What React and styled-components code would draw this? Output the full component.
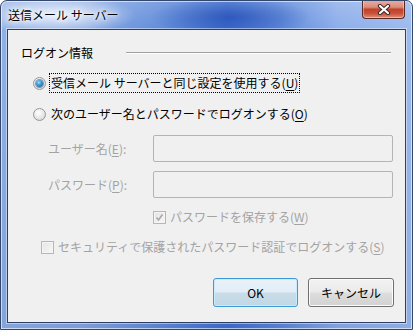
import React from "react";
import styled, { createGlobalStyle } from "styled-components";

const Global = createGlobalStyle`
  html, body { margin: 0; padding: 0; background: #ffffff; }
  body { font-family: "Noto Sans CJK JP", "Noto Sans", sans-serif; font-size: 12px; }
  * { box-sizing: border-box; }
`;

const Window = styled.div`
  width: 413px;
  height: 330px;
  display: flex;
  flex-direction: column;
  border-radius: 7px 7px 0 0;
  border: 1px solid #34466a;
  box-shadow: inset 0 0 0 1px rgba(255,255,255,0.6);
  background:
    radial-gradient(ellipse 80px 20px at 55px 14px, rgba(255,255,255,0.8), rgba(255,255,255,0) 100%),
    radial-gradient(ellipse 80px 20px at 230px 16px, rgba(20,60,170,0.55), rgba(20,60,170,0) 100%),
    linear-gradient(180deg, rgba(255,255,255,0.18) 0px, rgba(255,255,255,0) 30px, rgba(0,20,80,0.08) 100%),
    linear-gradient(90deg, #8fb0e6 0%, #86a8e4 20%, #5e8ad9 40%, #3f70d0 55%, #5c88da 68%, #8cadea 82%, #9bbaee 100%);
  overflow: hidden;
`;

const TitleBar = styled.div`
  height: 28px;
  display: flex;
  justify-content: space-between;
  align-items: flex-start;
  flex-shrink: 0;
`;

const TitleText = styled.div`
  padding: 6px 0 0 7px;
  font-size: 12px;
  line-height: 16px;
  color: #000;
  text-shadow: 0 0 6px #fff, 0 0 3px #fff, 0 0 8px #fff;
`;

const CloseButton = styled.div`
  width: 43px;
  height: 19px;
  margin: -1px 7px 0 0;
  border: 1px solid #5a2a24;
  border-top: none;
  border-radius: 0 0 4px 4px;
  background: linear-gradient(180deg, #e8b1a5 0%, #d98b7a 40%, #c2412a 52%, #c9503a 75%, #e2927c 100%);
  box-shadow: inset 0 0 0 1px rgba(255,255,255,0.35);
  display: flex;
  align-items: center;
  justify-content: center;
`;

const Frame = styled.div`
  flex: 1;
  display: flex;
  padding: 0 6px 6px 6px;
`;

const Panel = styled.div`
  flex: 1;
  background: #f0f0f0;
  border: 1px solid #2f3f63;
  box-shadow: 0 0 0 1px rgba(255,255,255,0.45);
  display: flex;
  flex-direction: column;
  padding-right: 11px;
`;

const GroupHeader = styled.div`
  display: flex;
  align-items: center;
  height: 16px;
  margin-top: 15px;
  padding-left: 13px;
  line-height: 16px;
  color: #000;
`;

const Separator = styled.div`
  flex: 1;
  margin-left: 33px;
  margin-right: 3px;
  border-top: 1px solid #a0a0a0;
  border-bottom: 1px solid #ffffff;
  height: 2px;
  margin-top: -1px;
`;

const Row = styled.div`
  display: flex;
  align-items: center;
  height: ${(p) => p.$h || 20}px;
  margin-top: ${(p) => p.$mt}px;
  padding-left: ${(p) => p.$indent}px;
  line-height: 16px;
`;

const Radio = styled.span`
  width: 13px;
  height: 13px;
  border-radius: 50%;
  border: 1px solid #979797;
  background: radial-gradient(circle at 40% 35%, #ffffff 0%, #e6e6e6 55%, #c9c9c9 100%);
  display: flex;
  align-items: center;
  justify-content: center;
  flex-shrink: 0;
  &::after {
    content: "";
    width: 7px;
    height: 7px;
    border-radius: 50%;
    display: ${(p) => (p.$checked ? "block" : "none")};
    background: radial-gradient(circle at 40% 35%, #9fe0ff 0%, #3a9ad9 40%, #0f5597 100%);
    box-shadow: 0 0 0 1px rgba(20, 70, 120, 0.5);
  }
`;

const Label = styled.span`
  margin-left: ${(p) => p.$gap || 4}px;
  padding: 1px 1px;
  color: ${(p) => (p.$disabled ? "#a3a3a3" : "#000")};
  border: 1px ${(p) => (p.$focus ? "dotted #000" : "solid transparent")};
  white-space: nowrap;
  u { text-underline-offset: 2px; }
`;

const FieldLabel = styled.span`
  width: 105px;
  color: #a3a3a3;
  white-space: nowrap;
  u { text-underline-offset: 2px; }
`;

const Input = styled.div`
  width: 240px;
  height: 27px;
  border: 1px solid #b4b4b4;
  border-radius: 2px;
  background: #f0f0f0;
`;

const CheckBox = styled.span`
  width: 13px;
  height: 13px;
  border: 1px solid #b7b7b7;
  background: linear-gradient(135deg, #e4e4e4 0%, #f8f8f8 100%);
  box-shadow: inset 0 0 0 1px #f4f4f4;
  display: flex;
  align-items: center;
  justify-content: center;
  flex-shrink: 0;
`;

const ButtonRow = styled.div`
  display: flex;
  justify-content: flex-end;
  gap: 10px;
  margin-top: 23px;
`;

const Button = styled.div`
  width: ${(p) => p.$w}px;
  height: 29px;
  border: 1px solid ${(p) => (p.$default ? "#3c9bd6" : "#707070")};
  border-radius: 3px;
  display: flex;
  align-items: center;
  justify-content: center;
  color: #000;
  line-height: 16px;
  box-shadow: inset 0 0 0 1px ${(p) => (p.$default ? "#c8ecfd" : "#fbfbfb")};
  background: ${(p) =>
    p.$default
      ? "linear-gradient(180deg, #eaf2fa 0%, #e2edf7 48%, #c9dde9 52%, #c0d7e5 100%)"
      : "linear-gradient(180deg, #f2f2f2 0%, #ebebeb 48%, #dddddd 52%, #d2d2d2 100%)"};
`;

export default function App() {
  return (
    <>
      <Global />
      <Window>
        <TitleBar>
          <TitleText>送信メール サーバー</TitleText>
          <CloseButton>
            <svg width="14" height="11" viewBox="0 0 14 11">
              <path d="M3 2 L11 9 M11 2 L3 9" stroke="#3b2a2a" strokeWidth="4.2" strokeLinecap="round" fill="none" />
              <path d="M3 2 L11 9 M11 2 L3 9" stroke="#ffffff" strokeWidth="2.2" strokeLinecap="round" fill="none" />
            </svg>
          </CloseButton>
        </TitleBar>
        <Frame>
          <Panel>
            <GroupHeader>
              <span>ログオン情報</span>
              <Separator />
            </GroupHeader>
            <Row $mt={12} $indent={25}>
              <Radio $checked />
              <Label $focus $gap={3}>受信メール サーバーと同じ設定を使用する(<u>U</u>)</Label>
            </Row>
            <Row $mt={11} $indent={25}>
              <Radio />
              <Label $gap={3}>次のユーザー名とパスワードでログオンする(<u>O</u>)</Label>
            </Row>
            <Row $h={27} $mt={11} $indent={40}>
              <FieldLabel>ユーザー名(<u>E</u>):</FieldLabel>
              <Input />
            </Row>
            <Row $h={27} $mt={9} $indent={40}>
              <FieldLabel>パスワード(<u>P</u>):</FieldLabel>
              <Input />
            </Row>
            <Row $h={16} $mt={11} $indent={145}>
              <CheckBox>
                <svg width="9" height="9" viewBox="0 0 9 9">
                  <path d="M1.5 4.5 L3.5 7 L7.5 1.5" stroke="#a8a8a8" strokeWidth="1.6" fill="none" />
                </svg>
              </CheckBox>
              <Label $disabled $gap={2}>パスワードを保存する(<u>W</u>)</Label>
            </Row>
            <Row $h={16} $mt={14} $indent={33}>
              <CheckBox />
              <Label $disabled $gap={2}>セキュリティで保護されたパスワード認証でログオンする(<u>S</u>)</Label>
            </Row>
            <ButtonRow>
              <Button $default $w={85}>OK</Button>
              <Button $w={86}>キャンセル</Button>
            </ButtonRow>
          </Panel>
        </Frame>
      </Window>
    </>
  );
}
